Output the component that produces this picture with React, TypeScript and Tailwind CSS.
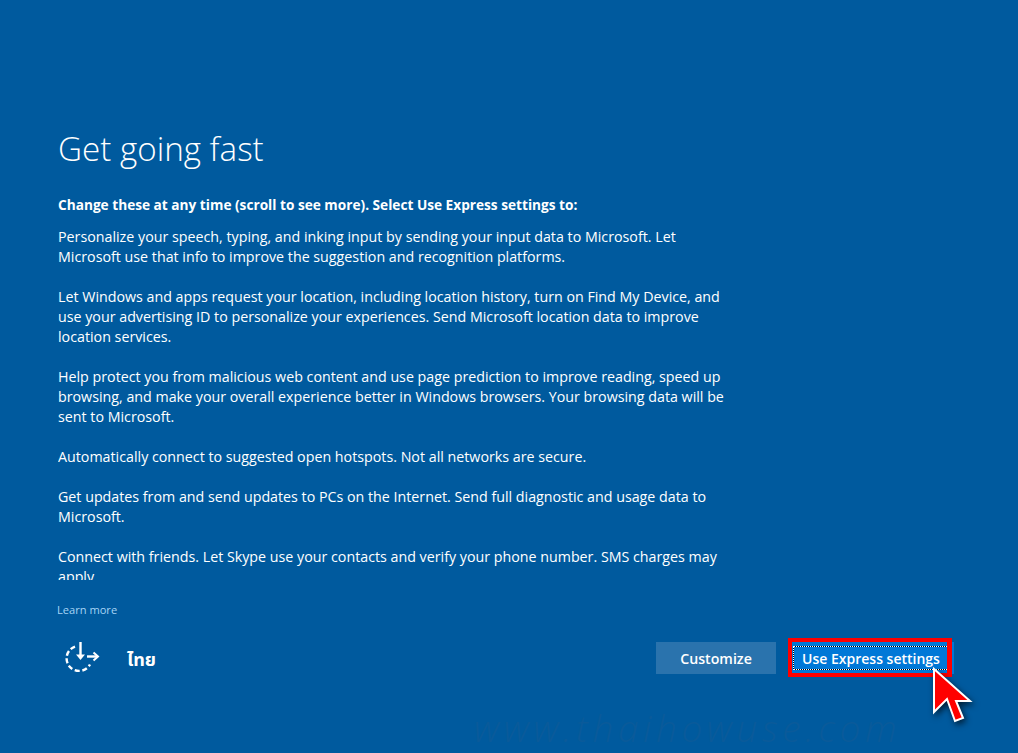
const paragraphs: string[][] = [
  ["Personalize your speech, typing, and inking input by sending your input data to Microsoft. Let", "Microsoft use that info to improve the suggestion and recognition platforms."],
  ["Let Windows and apps request your location, including location history, turn on Find My Device, and", "use your advertising ID to personalize your experiences. Send Microsoft location data to improve", "location services."],
  ["Help protect you from malicious web content and use page prediction to improve reading, speed up", "browsing, and make your overall experience better in Windows browsers. Your browsing data will be", "sent to Microsoft."],
  ["Automatically connect to suggested open hotspots. Not all networks are secure."],
  ["Get updates from and send updates to PCs on the Internet. Send full diagnostic and usage data to", "Microsoft."],
  ["Connect with friends. Let Skype use your contacts and verify your phone number. SMS charges may", "apply."],
];

function AccessIcon() {
  return (
    <svg width="44" height="34" viewBox="0 0 44 34" fill="none" stroke="white" strokeWidth="2.4">
      <path d="M17 5.6 A12.5 12.5 0 1 0 32 23.5" strokeDasharray="5 2.6" />
      <path d="M22.5 1 V16" />
      <path d="M18 13.5 L22.5 19 L27 13.5 Z" fill="white" stroke="none" />
      <path d="M29 15.5 H39" />
      <path d="M35.5 11.5 L40 15.5 L35.5 19.5" strokeWidth="2" />
    </svg>
  );
}

function Cursor() {
  return (
    <svg width="50" height="64" viewBox="0 0 50 64" className="absolute left-[928px] top-[664px] drop-shadow-[2px_3px_3px_rgba(0,0,0,0.65)]">
      <path d="M6 5 L42 37 L28 37 L35 54 L27 57 L19 35 L6 48 Z" fill="#ff0000" stroke="white" strokeWidth="2" />
    </svg>
  );
}

export default function App() {
  return (
    <div className="relative flex h-[753px] w-[1018px] flex-col overflow-hidden bg-[#005a9e] pl-[58px] pt-[127px] font-['Open_Sans',sans-serif] text-white">
      <h1 className="h-[44px] text-[33.2px] leading-[44px] font-light">Get going fast</h1>
      <p className="mt-[24px] text-[13.67px] leading-[20px] font-bold">Change these at any time (scroll to see more). Select Use Express settings to:</p>
      <div className="mt-[12px] h-[353px] w-[680px] overflow-hidden text-[14.25px] leading-[20px]">
        {paragraphs.map((lines, i) => (
          <p key={i} className="mb-[20px] whitespace-nowrap">
            {lines.map((l) => (
              <span key={l} className="block">{l}</span>
            ))}
          </p>
        ))}
      </div>
      <a className="mt-[22px] -ml-px text-[11.1px] leading-[16px] text-[#a6d4f5]">Learn more</a>
      <div className="mt-[23px] flex h-[34px] items-center pr-[64px]">
        <AccessIcon />
        <span className="ml-[25px] pt-[5px] font-['Noto_Sans_Thai','Noto_Sans',sans-serif] text-[18px] font-bold">ไทย</span>
        <button className="ml-auto h-[32px] w-[120px] bg-[#2a73ad] pt-px text-[14.2px] font-semibold">Customize</button>
        <button className="relative ml-[16px] flex h-[32px] w-[162px] items-center bg-[#0078d7] pl-px text-[14px] font-semibold">
          <span className="flex h-[24px] w-[156px] items-center justify-center border border-black">
            <span className="-m-px flex h-[24px] w-[156px] items-center justify-center border border-dotted border-white pt-px">Use Express settings</span>
          </span>
          <span className="absolute -left-[4px] -top-[4px] h-[39px] w-[164px] border-[4px] border-r-[5px] border-[#ff0000]" />
        </button>
      </div>
      <span className="absolute left-[474px] top-[706px] text-[37px] leading-[44px] font-light tracking-[4.6px] text-[#0a5a9a] italic">www.thaihowuse.com</span>
      <Cursor />
    </div>
  );
}
